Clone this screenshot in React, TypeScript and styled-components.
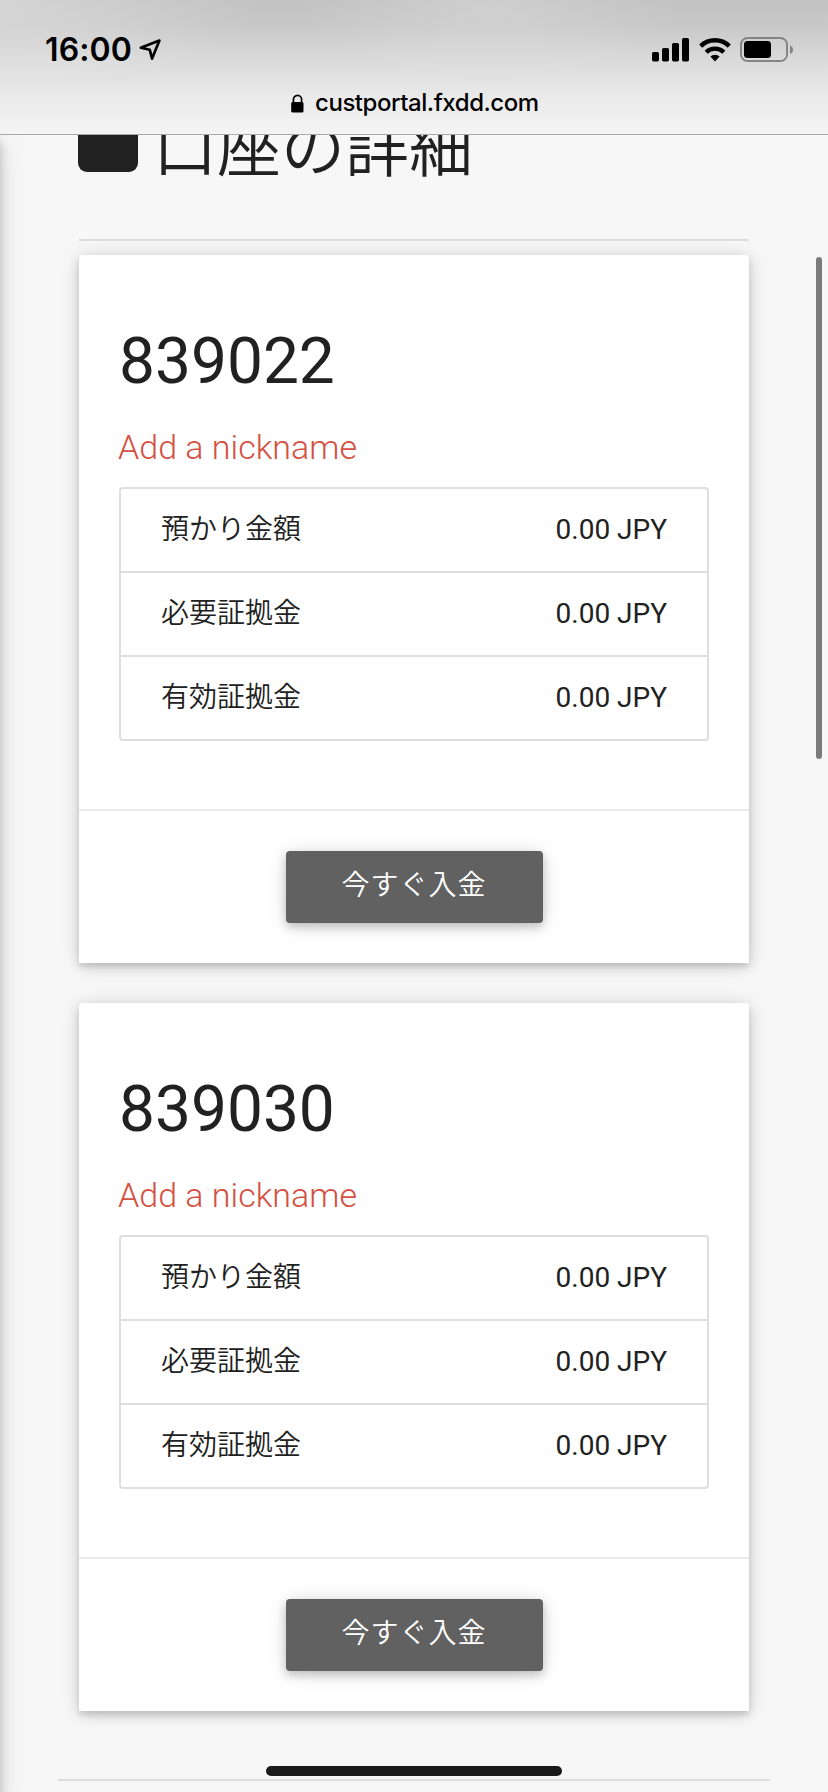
import React from "react";
import styled, { createGlobalStyle } from "styled-components";

const GlobalStyle = createGlobalStyle`
  * { box-sizing: border-box; }
  html, body { margin: 0; padding: 0; background: #f7f7f7; }
  body { overflow: hidden; }
`;

const Screen = styled.div`
  position: relative;
  width: 828px;
  height: 1792px;
  overflow: hidden;
  display: flex;
  flex-direction: column;
  background: #f7f7f7;
  color: #212121;
  font-family: Roboto, "Noto Sans CJK JP", sans-serif;
`;

const BrowserBar = styled.header`
  flex: none;
  height: 135px;
  display: flex;
  flex-direction: column;
  border-bottom: 1px solid #a9a9a9;
  background:
    radial-gradient(ellipse 260px 90px at 0 0, rgba(255, 255, 255, 0.3), rgba(255, 255, 255, 0)),
    radial-gradient(ellipse 190px 80px at 490px 0, rgba(255, 255, 255, 0.2), rgba(255, 255, 255, 0)),
    linear-gradient(#c2c2c2 0, #c8c8c8 25px, #dadada 60px, #ebebeb 100px, #f4f4f4 134px);
  color: #000;
  font-family: Inter, sans-serif;
`;

const StatusRow = styled.div`
  height: 82px;
  padding: 18px 34px 0 45px;
  display: flex;
  align-items: center;
`;

const Clock = styled.span`
  font-size: 32px;
  line-height: 40px;
  font-weight: 600;
  letter-spacing: 0.1px;
  width: 94px;
  white-space: nowrap;
`;

const StatusIcons = styled.div`
  margin-left: auto;
  display: flex;
  align-items: center;
  gap: 9px;
`;

const AddressRow = styled.div`
  display: flex;
  align-items: center;
  height: 42px;
  padding-left: 291px;
  gap: 11px;
  font-size: 24px;
  font-weight: 550;
  white-space: nowrap;
`;

const Address = styled.span`
  margin-top: -2px;
  letter-spacing: -0.45px;
`;

const Page = styled.main`
  flex: 1;
  min-height: 0;
  overflow: hidden;
  padding: 0 79px;
  display: flex;
  flex-direction: column;
`;

const Heading = styled.h1`
  flex: none;
  margin: -24px 0 0 -1px;
  height: 128px;
  display: flex;
  align-items: flex-start;
  font-size: 64px;
  line-height: 78px;
  font-weight: 350;
  white-space: nowrap;
`;

const HeadingMark = styled.span`
  width: 60px;
  height: 60px;
  margin: 1px 15px 0 0;
  border-radius: 9px;
  background: #212121;
`;

const Rule = styled.hr<{ $outset?: boolean }>`
  flex: none;
  height: 2px;
  border: 0;
  background: #dedede;
  margin: ${(p) => (p.$outset ? "28px -21px 0" : "0 0 14px")};
`;

const Card = styled.section`
  flex: none;
  height: 708px;
  margin-bottom: 40px;
  display: flex;
  flex-direction: column;
  background: #fff;
  border-radius: 4px 4px 0 0;
  box-shadow:
    0 4px 4px rgba(0, 0, 0, 0.08),
    0 4px 12px rgba(0, 0, 0, 0.1),
    0 2px 20px rgba(0, 0, 0, 0.14);
`;

const CardBody = styled.div`
  height: 554px;
  padding: 69px 40px 0;
`;

const AccountNumber = styled.h2`
  margin: 0;
  font-size: 64px;
  line-height: 76px;
  font-weight: 400;
`;

const NicknameLink = styled.a`
  display: block;
  height: 40px;
  margin: 27px 0 20px -1px;
  font-size: 34px;
  line-height: 40px;
  font-weight: 300;
  color: #d4503f;
`;

const Balances = styled.dl`
  margin: 0;
  border: 2px solid #dedede;
  border-radius: 4px;
`;

const BalanceRow = styled.div`
  height: 84px;
  padding: 0 40px;
  display: flex;
  justify-content: space-between;
  font-size: 28px;
  line-height: 82px;
  border-bottom: 2px solid #dedede;
  &:last-child {
    height: 82px;
    border-bottom: 0;
  }
`;

const Label = styled.dt`
  font-weight: 350;
`;

const Amount = styled.dd`
  margin: 0;
  font-weight: 400;
`;

const CardFooter = styled.footer`
  height: 154px;
  border-top: 2px solid #ebebeb;
  display: flex;
  justify-content: center;
  padding: 40px 0;
`;

const DepositButton = styled.button`
  width: 257px;
  height: 72px;
  padding: 0 0 2px;
  border: 0;
  border-radius: 4px;
  background: #616161;
  color: #fff;
  font: 350 28px/68px Roboto, "Noto Sans CJK JP", sans-serif;
  letter-spacing: 1px;
  box-shadow: 0 4px 10px rgba(0, 0, 0, 0.2), 0 2px 22px rgba(0, 0, 0, 0.12);
`;

const DrawerShadow = styled.div`
  position: absolute;
  left: -20px;
  top: 135px;
  bottom: -20px;
  width: 20px;
  box-shadow: 0 8px 12px rgba(0, 0, 0, 0.24), 0 4px 34px rgba(0, 0, 0, 0.1);
  clip-path: inset(0 -50px 0 0);
`;

const ScrollThumb = styled.div`
  position: absolute;
  right: 6px;
  top: 257px;
  width: 6px;
  height: 502px;
  border-radius: 3px;
  background: #7b7b7b;
`;

const HomeIndicator = styled.div`
  position: absolute;
  left: 266px;
  bottom: 16px;
  width: 296px;
  height: 10px;
  border-radius: 5px;
  background: #1a1a1a;
`;

const LocationArrow = () => (
  <svg width="23" height="22" viewBox="0 0 23 22" fill="none">
    <path d="M20.4 1.6 1.8 8.8 10.8 10.8 13.1 19.6Z" stroke="#000" strokeWidth="2.7" strokeLinejoin="round" />
  </svg>
);

const Signal = () => (
  <svg width="38" height="24" viewBox="0 0 38 24">
    <rect x="0" y="14" width="7" height="9.4" rx="1.6" />
    <rect x="10" y="10" width="7" height="13.4" rx="1.6" />
    <rect x="20" y="5" width="7" height="18.4" rx="1.6" />
    <rect x="30" y="0" width="7" height="23.4" rx="1.6" />
  </svg>
);

const Wifi = () => (
  <svg width="32" height="24" viewBox="0 0 32 24" fill="none" stroke="#000" strokeWidth="4.4">
    <path d="M1.7 8.1A20.5 20.5 0 0 1 30.3 8.1" />
    <path d="M7.2 14.2A12.6 12.6 0 0 1 24.8 14.2" />
    <path d="M11.4 18.6A6.6 6.6 0 0 1 20.6 18.6L16 23.4Z" fill="#000" stroke="none" />
  </svg>
);

const Battery = () => (
  <svg width="54" height="26" viewBox="0 0 54 26">
    <rect x="1" y="1" width="46" height="23" rx="6.5" fill="none" stroke="#858585" strokeWidth="2" />
    <rect x="4" y="4" width="27" height="17" rx="3.5" />
    <path d="M50 8.5Q53 9.5 53 12.7T50 17Z" fill="#858585" />
  </svg>
);

const Lock = () => (
  <svg width="13" height="19" viewBox="0 0 13 19">
    <path d="M2.4 9V5.6a4.1 4.3 0 0 1 8.2 0V9" fill="none" stroke="#000" strokeWidth="1.7" />
    <rect x="0.2" y="8" width="12.3" height="10.4" rx="1.5" />
  </svg>
);

const balances = [
  { label: "預かり金額", amount: "0.00 JPY" },
  { label: "必要証拠金", amount: "0.00 JPY" },
  { label: "有効証拠金", amount: "0.00 JPY" },
];

const AccountCard = ({ number }: { number: string }) => (
  <Card>
    <CardBody>
      <AccountNumber>{number}</AccountNumber>
      <NicknameLink>Add a nickname</NicknameLink>
      <Balances>
        {balances.map((b) => (
          <BalanceRow key={b.label}>
            <Label>{b.label}</Label>
            <Amount>{b.amount}</Amount>
          </BalanceRow>
        ))}
      </Balances>
    </CardBody>
    <CardFooter>
      <DepositButton>今すぐ入金</DepositButton>
    </CardFooter>
  </Card>
);

export default function App() {
  return (
    <Screen lang="ja">
      <GlobalStyle />
      <BrowserBar>
        <StatusRow>
          <Clock>16:00</Clock>
          <LocationArrow />
          <StatusIcons>
            <Signal />
            <Wifi />
            <Battery />
          </StatusIcons>
        </StatusRow>
        <AddressRow>
          <Lock />
          <Address>custportal.fxdd.com</Address>
        </AddressRow>
      </BrowserBar>
      <Page>
        <Heading>
          <HeadingMark />
          口座の詳細
        </Heading>
        <Rule />
        <AccountCard number="839022" />
        <AccountCard number="839030" />
        <Rule $outset />
      </Page>
      <DrawerShadow />
      <ScrollThumb />
      <HomeIndicator />
    </Screen>
  );
}
